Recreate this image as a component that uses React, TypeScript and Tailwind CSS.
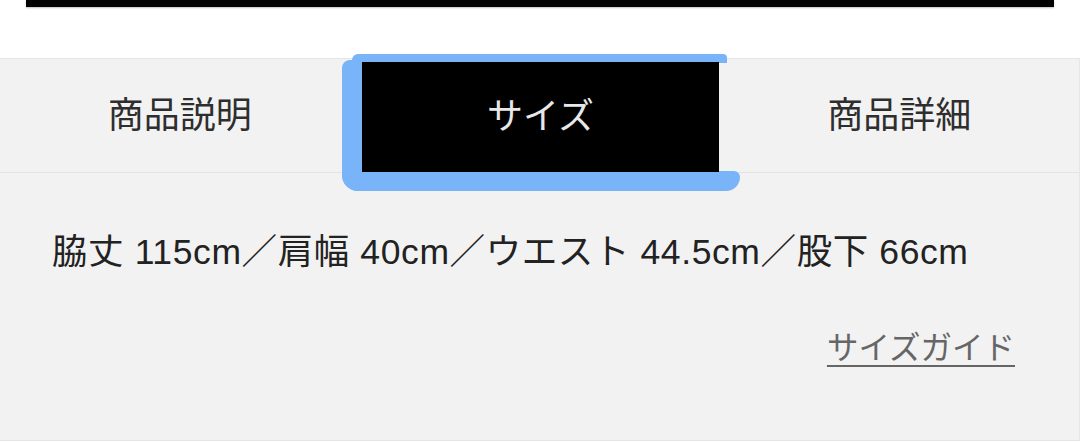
import { useState } from 'react'

// ─── Tab data ──────────────────────────────────────────────────

const tabs = ['商品説明', 'サイズ', '商品詳細']

const sizeText = '脇丈 115cm／肩幅 40cm／ウエスト 44.5cm／股下 66cm'

// ─── Focus ring around the active tab ──────────────────────────

function FocusRing() {
  return (
    <>
      {/* top edge */}
      <span className="absolute left-[-8px] top-[-5px] h-[9px] w-[375px] rounded-tr-[4px] rounded-tl-[6px] bg-[#78b4f7]" />
      {/* left edge */}
      <span className="absolute left-[-18px] top-[1px] h-[131px] w-[21px] rounded-tl-[8px] rounded-bl-[16px] bg-[#78b4f7]" />
      {/* bottom edge */}
      <span className="absolute left-[-18px] top-[112px] h-[20px] w-[398px] rounded-bl-[16px] rounded-br-[14px] rounded-tr-[6px] bg-[#78b4f7]" />
    </>
  )
}

export default function App() {
  const [active, setActive] = useState(1)

  return (
    <div className="w-[1080px] h-[443px] overflow-hidden bg-white font-['Liberation_Sans','Noto_Sans_CJK_JP',sans-serif]">
      {/* Bottom of the previous block */}
      <div className="mx-[26px] h-[7px] bg-black shadow-[0_1px_2px_rgba(0,0,0,0.25)]" />

      <section className="mt-[51px] h-[383px] border-t border-r border-b border-[#e6e6e6] bg-[#f2f2f2]">
        {/* Tabs */}
        <div className="grid grid-cols-3 h-[114px] border-b border-[#e3e3e3]">
          {tabs.map((label, i) => (
            <button
              key={label}
              onClick={() => setActive(i)}
              className="relative h-full"
            >
              {i === active ? (
                <>
                  <FocusRing />
                  <span className="relative ml-[2px] mt-[3px] flex h-[110px] items-center justify-center bg-black text-[36px] text-[#e8e8e8]">
                    {label}
                  </span>
                </>
              ) : (
                <span className="flex h-full items-center justify-center text-[36px] text-[#2e2e2e]">
                  {label}
                </span>
              )}
            </button>
          ))}
        </div>

        {/* Size content */}
        <div className="pl-[52px] pr-[64px] pt-[53px]">
          <p className="text-[35.5px] leading-[52px] tracking-[0.6px] text-[#222222] whitespace-nowrap">{sizeText}</p>
          <div className="mt-[47px] flex justify-end">
            <a className="text-[31.5px] leading-[46px] text-[#666666] underline decoration-2 underline-offset-[6px]">
              サイズガイド
            </a>
          </div>
        </div>
      </section>
    </div>
  )
}
